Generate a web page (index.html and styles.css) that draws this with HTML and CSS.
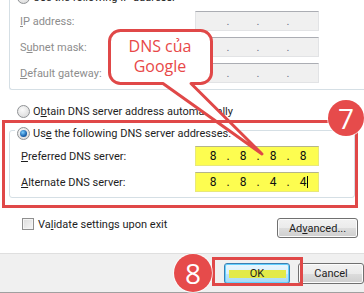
FILE: index.html
```html
<!DOCTYPE html>
<html lang="en">
<head>
    <meta charset="UTF-8">
    <title>DNS settings</title>
    <link rel="stylesheet" href="styles.css">
</head>
<body>
    <div class="dialog">
        <div class="ip-group">
            <div class="legend"><span class="radio"></span><span>Use the following IP address:</span></div>
            <div class="field-row disabled">
                <span class="label"><u>I</u>P address:</span>
                <span class="ip-box"><b></b><i>.</i><b></b><i>.</i><b></b><i>.</i><b></b></span>
            </div>
            <div class="field-row disabled">
                <span class="label">S<u>u</u>bnet mask:</span>
                <span class="ip-box"><b></b><i>.</i><b></b><i>.</i><b></b><i>.</i><b></b></span>
            </div>
            <div class="field-row disabled">
                <span class="label"><u>D</u>efault gateway:</span>
                <span class="ip-box"><b></b><i>.</i><b></b><i>.</i><b></b><i>.</i><b></b></span>
            </div>
        </div>

        <div class="option"><span class="radio"></span><span>O<u>b</u>tain DNS server address automatically</span></div>

        <div class="dns-group">
            <div class="legend"><span class="radio on"></span><span>Us<u>e</u> the following DNS server addresses:</span></div>
            <div class="field-row">
                <span class="label"><u>P</u>referred DNS server:</span>
                <span class="ip-box filled"><b>8</b><i>.</i><b>8</b><i>.</i><b>8</b><i>.</i><b>8</b></span>
            </div>
            <div class="field-row">
                <span class="label"><u>A</u>lternate DNS server:</span>
                <span class="ip-box filled"><b>8</b><i>.</i><b>8</b><i>.</i><b>4</b><i>.</i><b class="caret">4</b></span>
            </div>
        </div>

        <div class="extras">
            <label class="check"><span class="checkbox"></span><span>Va<u>l</u>idate settings upon exit</span></label>
            <button class="btn advanced">Ad<u>v</u>anced...</button>
        </div>

        <div class="footer">
            <button class="btn default"><span class="mark">OK</span></button>
            <button class="btn">Cancel</button>
        </div>

        <!-- annotations drawn over the dialog -->
        <svg class="bubble" width="364" height="293" viewBox="0 0 364 293">
            <path d="M120.5 30.5 H200.5 A11 11 0 0 1 211.5 41.5 V72.5 A11 11 0 0 1 200.5 83.5 H191 L262 154 L163 83.5 H120.5 A11 11 0 0 1 109.5 72.5 V41.5 A11 11 0 0 1 120.5 30.5 Z"
                  fill="#fff" stroke="#e04848" stroke-width="3" stroke-linejoin="round"/>
        </svg>
        <div class="bubble-text">DNS của<br>Google</div>
        <div class="frame frame-dns"></div>
        <div class="frame frame-ok"></div>
        <div class="step step-7">7</div>
        <div class="step step-8">8</div>
    </div>
</body>
</html>
```

FILE: styles.css
```css
body {
    margin: 0;
    background: #fff;
    font-family: Roboto, "Open Sans", sans-serif;
    font-size: 11px;
    color: #1e1e1e;
}

u {
    text-decoration: underline;
    text-underline-offset: 1px;
}

.dialog {
    position: relative;
    width: 364px;
    height: 293px;
    overflow: hidden;
    background: #fff;
}

/* radios and checkbox */
.radio {
    display: inline-block;
    box-sizing: border-box;
    width: 13px;
    height: 13px;
    border-radius: 50%;
    border: 1px solid #8f9295;
    background: radial-gradient(circle at 40% 35%, #fbfbfb, #d4d4d4);
    margin-right: 3px;
    position: relative;
    flex: none;
}

.radio.on::after {
    content: "";
    position: absolute;
    left: 2px;
    top: 2px;
    width: 7px;
    height: 7px;
    border-radius: 50%;
    background: radial-gradient(circle at 40% 35%, #7fd0ff, #1a64b0 60%, #0c3f7a);
}

.checkbox {
    display: inline-block;
    box-sizing: border-box;
    width: 12px;
    height: 12px;
    border: 1px solid #8f8f8f;
    background: linear-gradient(135deg, #dcdcdc, #f6f6f6);
    box-shadow: inset 0 0 0 1px #f4f4f4;
    margin-right: 4px;
}

/* IP group */
.ip-group {
    margin: -12px 0 0 9px;
    border-left: 1px solid #d5dfe5;
    border-bottom: 1px solid #d5dfe5;
    border-bottom-left-radius: 3px;
    padding-bottom: 6px;
}

.legend {
    display: flex;
    align-items: center;
    height: 18px;
    padding-left: 7px;
}

.ip-group .legend + .field-row {
    margin-top: 5px;
}

.field-row {
    display: flex;
    align-items: center;
    height: 20px;
    padding-left: 10px;
    margin-top: 6px;
}

.label {
    width: 175px;
    flex: none;
}

.disabled .label {
    color: #8d8d8d;
}

.ip-box {
    box-sizing: border-box;
    display: flex;
    align-items: center;
    width: 124px;
    height: 20px;
    padding: 0 2px 0 4px;
    background: #f0f0f0;
    border: 1px solid #e2e3e5;
    border-top-color: #abadb3;
}

.ip-box b {
    flex: 1;
    text-align: center;
    font-weight: normal;
}

.ip-box i {
    width: 4px;
    text-align: center;
    font-style: normal;
    color: #6d6d8a;
}

.ip-box.filled {
    background: #fdfd50;
    border-color: #e8e87a;
    border-top-color: #b5b58a;
    color: #111;
    font-size: 12px;
}

.ip-box.filled i {
    color: #111;
}

.caret {
    position: relative;
}

.caret::after {
    content: "";
    position: absolute;
    top: 1px;
    bottom: 1px;
    left: 17px;
    width: 1px;
    background: #000;
}

/* DNS options */
.option {
    display: flex;
    align-items: center;
    height: 18px;
    margin-top: 12px;
    padding-left: 17px;
}

.dns-group {
    margin: 10px 0 0 9px;
    width: 346px;
    box-sizing: border-box;
    border: 1px solid #d5dfe5;
    border-radius: 3px;
    padding-bottom: 5px;
}

.dns-group .legend {
    width: fit-content;
    margin: -7px 0 0 5px;
    padding: 0 3px 0 2px;
    background: #fff;
}

.dns-group .field-row {
    padding-left: 11px;
    margin-top: 6px;
}

.dns-group .legend + .field-row {
    margin-top: 4px;
}

.dns-group .label {
    width: 174px;
}

/* validate + advanced */
.extras {
    display: flex;
    justify-content: space-between;
    align-items: flex-start;
    margin-top: 20px;
    padding: 0 6px 0 22px;
}

.check {
    display: flex;
    align-items: center;
    height: 12px;
}

.btn {
    box-sizing: border-box;
    height: 21px;
    width: 73px;
    padding: 0;
    font: inherit;
    color: #1e1e1e;
    border: 1px solid #707070;
    border-radius: 3px;
    background: linear-gradient(#f2f2f2, #ebebeb 50%, #dddddd 50%, #cfcfcf);
    box-shadow: inset 0 0 0 1px #fcfcfc;
}

.btn.advanced {
    width: 81px;
    height: 20px;
}

/* footer */
.footer {
    display: flex;
    gap: 8px;
    margin-top: 15px;
    height: 40px;
    padding: 9px 0 0 224px;
    box-sizing: border-box;
    border-top: 1px solid #dfdfdf;
    border-bottom: 1px solid #a0a0a0;
    background: #f0f0f0;
}

.btn.default {
    border-color: #3c7fb1;
    background: linear-gradient(#eaf6fd, #d9f0fc 50%, #bee6fd 50%, #a7d9f5);
    box-shadow: inset 0 0 0 1px #62d0ff;
}

.mark {
    display: inline-block;
    width: 57px;
    line-height: 8px;
    background: #e3ea48;
}

/* annotations */
.bubble {
    position: absolute;
    left: 0;
    top: 0;
}

.bubble-text {
    position: absolute;
    left: 108px;
    top: 36px;
    width: 104px;
    text-align: center;
    color: #e84848;
    font-family: "Open Sans", sans-serif;
    font-size: 16px;
    line-height: 20px;
}

.frame {
    position: absolute;
    border: 3px solid #e04848;
}

.frame-dns {
    left: 2px;
    top: 120px;
    width: 350px;
    height: 82px;
}

.frame-ok {
    left: 212px;
    top: 257px;
    width: 85px;
    height: 23px;
}

.step {
    position: absolute;
    width: 36px;
    height: 36px;
    border-radius: 50%;
    background: #e64b4b;
    color: #fff;
    font-family: "Open Sans", sans-serif;
    font-size: 28px;
    line-height: 36px;
    text-align: center;
    box-shadow: 0 0 0 1px rgba(255, 255, 255, 0.7);
}

.step-7 {
    left: 328px;
    top: 100px;
}

.step-8 {
    left: 174px;
    top: 254px;
    width: 38px;
    height: 38px;
    line-height: 38px;
}
```
